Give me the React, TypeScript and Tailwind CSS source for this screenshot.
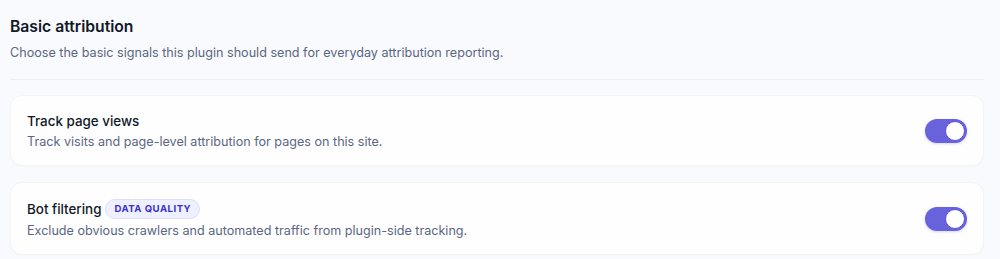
import React from "react";

function Toggle() {
  return (
    <div className="flex h-6 w-[42px] shrink-0 items-center justify-end rounded-full bg-[#6962dd] p-[2px] shadow-[0_1px_3px_rgba(99,91,220,0.25)]">
      <div className="h-5 w-5 rounded-full border border-[#5c54d6] bg-white" />
    </div>
  );
}

function Row({ title, desc, badge }: { title: string; desc: string; badge?: string }) {
  return (
    <div className="flex items-center justify-between rounded-xl border border-[#f3f4f8] bg-[#fefeff] px-4 pb-[14px] pt-[15px] shadow-[0_1px_2px_rgba(16,24,40,0.02)]">
      <div className="flex flex-col">
        <div className={badge ? "flex h-[22px] items-center gap-[4px]" : "flex h-5 items-center gap-[4px]"}>
          <span className="text-[13.4px] font-medium leading-5 text-[#111827]">{title}</span>
          {badge && (
            <span className="flex h-[20px] items-center rounded-full border border-[#dcdffc] bg-[#eef0ff] px-[8px] text-[9.6px] font-bold uppercase leading-none tracking-[0.05em] text-[#3a31c9]">
              {badge}
            </span>
          )}
        </div>
        <div className="mt-[2px] text-[12.6px] leading-[18px] text-[#5a6782]">{desc}</div>
      </div>
      <Toggle />
    </div>
  );
}

export default function App() {
  return (
    <div
      className="min-h-[259px] w-full bg-[#f9fafd] pl-[10px] pr-[16px] pt-[16px]"
      style={{ fontFamily: "Inter, 'Noto Sans', sans-serif" }}
    >
      <h2 className="text-[15.7px] font-semibold leading-[22px] text-[#111827]">Basic attribution</h2>
      <p className="mt-[5px] text-[12.6px] leading-5 text-[#5a6782]">
        Choose the basic signals this plugin should send for everyday attribution reporting.
      </p>
      <div className="mt-[16px] h-px bg-[#eceef4]" />
      <div className="mt-[15px] flex flex-col gap-4">
        <Row title="Track page views" desc="Track visits and page-level attribution for pages on this site." />
        <Row
          title="Bot filtering"
          badge="Data quality"
          desc="Exclude obvious crawlers and automated traffic from plugin-side tracking."
        />
      </div>
    </div>
  );
}
